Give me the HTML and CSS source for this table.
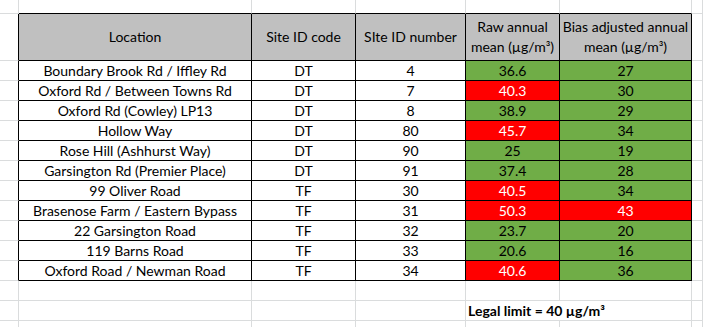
FILE: index.html
```html
<!DOCTYPE html>
<html>
<head>
<meta charset="utf-8">
<link rel="stylesheet" href="styles.css">
</head>
<body>
<div class="sheet">
  <!-- row 1 -->
  <div class="c"></div>
  <div class="c tb"></div><div class="c tb"></div><div class="c tb"></div><div class="c tb"></div><div class="c tb"></div>
  <div class="c"></div>
  <!-- header -->
  <div class="c lb"></div>
  <div class="c t h">Location</div>
  <div class="c t h">Site ID code</div>
  <div class="c t h">SIte ID number</div>
  <div class="c t h">Raw annual<br>mean (µg/m³)</div>
  <div class="c t h">Bias adjusted annual<br>mean (µg/m³)</div>
  <div class="c"></div>
  <!-- data -->
  <div class="c lb"></div><div class="c t">Boundary Brook Rd / Iffley Rd</div><div class="c t">DT</div><div class="c t">4</div><div class="c t g">36.6</div><div class="c t g">27</div><div class="c"></div>
  <div class="c lb"></div><div class="c t">Oxford Rd / Between Towns Rd</div><div class="c t">DT</div><div class="c t">7</div><div class="c t r">40.3</div><div class="c t g">30</div><div class="c"></div>
  <div class="c lb"></div><div class="c t">Oxford Rd (Cowley) LP13</div><div class="c t">DT</div><div class="c t">8</div><div class="c t g">38.9</div><div class="c t g">29</div><div class="c"></div>
  <div class="c lb"></div><div class="c t">Hollow Way</div><div class="c t">DT</div><div class="c t">80</div><div class="c t r">45.7</div><div class="c t g">34</div><div class="c"></div>
  <div class="c lb"></div><div class="c t">Rose Hill (Ashhurst Way)</div><div class="c t">DT</div><div class="c t">90</div><div class="c t g">25</div><div class="c t g">19</div><div class="c"></div>
  <div class="c lb"></div><div class="c t">Garsington Rd (Premier Place)</div><div class="c t">DT</div><div class="c t">91</div><div class="c t g">37.4</div><div class="c t g">28</div><div class="c"></div>
  <div class="c lb"></div><div class="c t">99 Oliver Road</div><div class="c t">TF</div><div class="c t">30</div><div class="c t r">40.5</div><div class="c t g">34</div><div class="c"></div>
  <div class="c lb"></div><div class="c t">Brasenose Farm / Eastern Bypass</div><div class="c t">TF</div><div class="c t">31</div><div class="c t r">50.3</div><div class="c t r">43</div><div class="c"></div>
  <div class="c lb"></div><div class="c t">22 Garsington Road</div><div class="c t">TF</div><div class="c t">32</div><div class="c t g">23.7</div><div class="c t g">20</div><div class="c"></div>
  <div class="c lb"></div><div class="c t">119 Barns Road</div><div class="c t">TF</div><div class="c t">33</div><div class="c t g">20.6</div><div class="c t g">16</div><div class="c"></div>
  <div class="c lb"></div><div class="c t">Oxford Road / Newman Road</div><div class="c t">TF</div><div class="c t">34</div><div class="c t r">40.6</div><div class="c t g">36</div><div class="c"></div>
  <!-- empty rows -->
  <div class="c"></div><div class="c"></div><div class="c"></div><div class="c"></div><div class="c"></div><div class="c"></div><div class="c"></div>
  <div class="c"></div><div class="c"></div><div class="c"></div><div class="c"></div><div class="c note">Legal limit = 40 µg/m³</div><div class="c"></div>
  <div class="c"></div><div class="c"></div><div class="c"></div><div class="c"></div><div class="c"></div><div class="c"></div><div class="c"></div>
</div>
</body>
</html>
```
FILE: styles.css
```css
* { box-sizing: border-box; }
html, body { margin: 0; padding: 0; background: #fff; overflow: hidden; }
body { font-family: Lato, "Open Sans", sans-serif; font-size: 14px; color: #000; }
.sheet {
  display: grid;
  grid-template-columns: 19px 233px 104px 110px 94px 132px 1fr;
  grid-template-rows: 14px 47px repeat(14, 20px);
  width: 703px;
}
.c {
  border-right: 1px solid #dadcdd;
  border-bottom: 1px solid #dadcdd;
  display: flex;
  align-items: center;
  justify-content: center;
  white-space: nowrap;
  line-height: 20px;
  text-align: center;
}
.tb { border-bottom-color: #000; }
.lb { border-right-color: #000; }
.t { border-right-color: #000; border-bottom-color: #000; }
.h { background: #c0c0c0; }
.g { background: #70ad47; }
.r { background: #ff0000; color: #fff; }
.note {
  grid-column: span 2;
  justify-content: flex-start;
  padding-left: 2px;
  font-weight: bold;
}
```
